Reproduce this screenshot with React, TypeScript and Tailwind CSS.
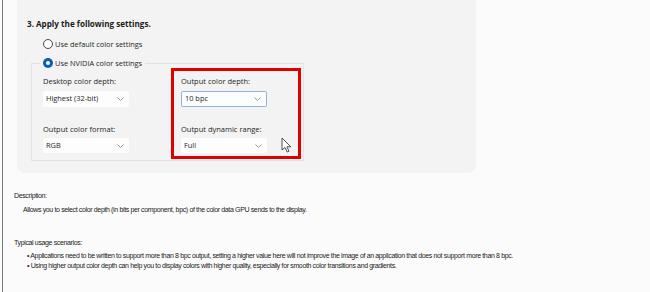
import React from 'react';

const Chevron: React.FC = () => (
  <svg width="7" height="4" viewBox="0 0 7 4" className="shrink-0">
    <path d="M0.5 0.5 L3.5 3.5 L6.5 0.5" fill="none" stroke="#8a8a8a" strokeWidth="0.9" />
  </svg>
);

const Select: React.FC<{ value: string; focused?: boolean; className?: string }> = ({ value, focused, className }) => (
  <div
    className={`flex items-center justify-between w-[86px] pl-[3px] pr-[5px] text-[7.4px] text-[#1f1f1f] ${
      focused ? 'bg-[#fbfdff] border border-[#93b3dc] rounded-[2px]' : 'bg-[#fdfdfd] rounded-[2px]'
    } ${className ?? ''}`}
  >
    <span>{value}</span>
    <Chevron />
  </div>
);

const Radio: React.FC<{ checked?: boolean; label: string }> = ({ checked, label }) => (
  <div className="flex items-center gap-[2px] h-[12px]">
    {checked ? (
      <span className="w-[10px] h-[10px] rounded-full bg-[#0a5fb4] flex items-center justify-center">
        <span className="w-[4px] h-[4px] rounded-full bg-white" />
      </span>
    ) : (
      <span className="w-[10px] h-[10px] rounded-full border border-[#4a4a4a] bg-[#fdfdfd]" />
    )}
    <span className="text-[7.4px] leading-[12px] text-[#262626]">{label}</span>
  </div>
);

const Cursor: React.FC = () => (
  <svg width="11" height="16" viewBox="0 0 11 16" className="ml-[14px] mt-[-1px]">
    <path d="M1 1 L1 13 L4 10.5 L6.2 15 L8 14.2 L5.9 9.8 L9.8 9.8 Z" fill="#ffffff" stroke="#3a3a3a" strokeWidth="0.9" strokeLinejoin="round" />
  </svg>
);

const App: React.FC = () => {
  return (
    <div className="w-[650px] h-[292px] bg-[#fbfbfb] flex overflow-hidden" style={{ fontFamily: '"Open Sans", "Noto Sans", sans-serif' }}>
      <div className="ml-[2px] w-px h-full bg-[#777777] shrink-0" />
      <div className="flex-1 flex flex-col">
        {/* settings panel */}
        <div className="ml-[14px] w-[459px] h-[173px] bg-[#f3f3f3] rounded-b-[8px] pl-[10px] pt-[18px] shrink-0">
          <p className="text-[8.1px] leading-[12px] font-bold text-[#1b1b1b]">3. Apply the following settings.</p>
          <div className="mt-[8px] ml-[16px]">
            <Radio label="Use default color settings" />
          </div>
          <div className="mt-[13px] ml-[4px] w-[273px] border border-[#e3e3e3] pl-[8px]">
            <div className="-mt-[6px] h-[10px] w-fit flex items-center bg-[#f3f3f3] px-[3px]">
              <Radio checked label="Use NVIDIA color settings" />
            </div>
            <div className="flex">
              <div className="w-[131px] border-[3px] border-transparent pt-[4px]">
                <p className="text-[7.5px] leading-[12px] text-[#262626]">Desktop color depth:</p>
                <Select value="Highest (32-bit)" className="mt-[4px] h-[16px] w-[85px]" />
                <p className="mt-[16px] text-[7.5px] leading-[12px] text-[#262626]">Output color format:</p>
                <Select value="RGB" className="mt-[3px] h-[15px] w-[85px]" />
              </div>
              <div className="w-[130px] border-[3px] border-[#e10000] pt-[4px] pl-[7px] pb-[3px] mb-[1px]">
                <p className="text-[7.5px] leading-[12px] text-[#262626]">Output color depth:</p>
                <Select value="10 bpc" focused className="mt-[4px] h-[16px]" />
                <p className="mt-[16px] text-[7.5px] leading-[12px] text-[#262626]">Output dynamic range:</p>
                <div className="mt-[3px] flex items-start">
                  <Select value="Full" className="h-[15px]" />
                  <Cursor />
                </div>
              </div>
            </div>
          </div>
        </div>

        {/* description */}
        <div
          className="pl-[11px] text-[7px] leading-[10px] tracking-[-0.36px] text-[#222222]"
          style={{ fontFamily: '"Liberation Sans", Arial, sans-serif' }}
        >
          <p className="mt-[18px]">Description:</p>
          <p className="mt-[4px] pl-[9px]">
            Allows you to select color depth (in bits per component, bpc) of the color data GPU sends to the display.
          </p>
          <p className="mt-[23px]">Typical usage scenarios:</p>
          <ul className="mt-[3px] pl-[13px]">
            <li>
              • Applications need to be written to support more than 8 bpc output, setting a higher value here will not improve the image of an
              application that does not support more than 8 bpc.
            </li>
            <li>• Using higher output color depth can help you to display colors with higher quality, especially for smooth color transitions and gradients.</li>
          </ul>
        </div>
      </div>
    </div>
  );
};

export default App;
